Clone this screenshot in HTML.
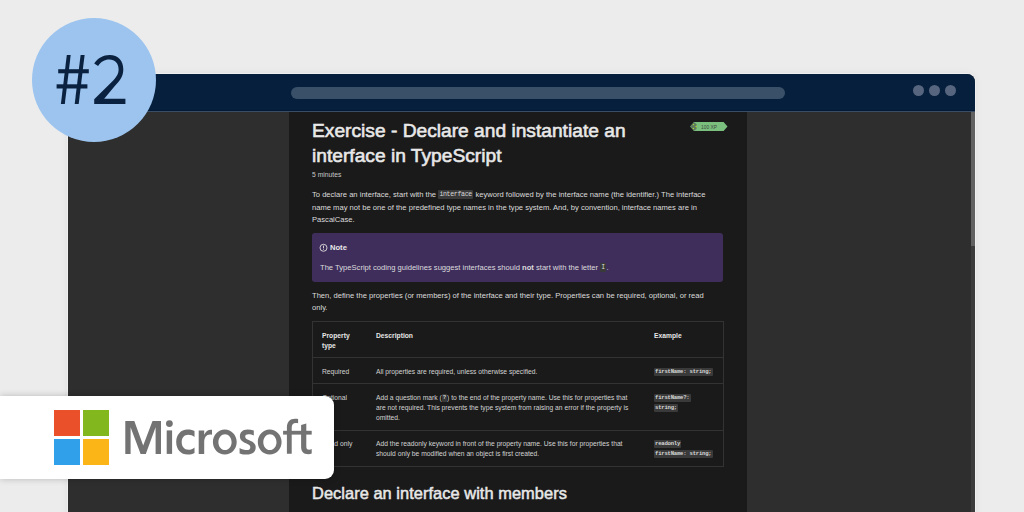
<!DOCTYPE html>
<html><head><meta charset="utf-8">
<style>
*{margin:0;padding:0;box-sizing:border-box}
html,body{width:1024px;height:512px;overflow:hidden;background:#ececec;font-family:"Liberation Sans",sans-serif}
.abs{position:absolute}
#win{position:absolute;left:68px;top:74px;width:907px;height:460px;border-radius:8px 8px 0 0;overflow:hidden;box-shadow:0 0 0 1px rgba(255,255,255,.4),0 0 8px rgba(0,0,0,.07);background:#2e2e2e}
#hdr{position:absolute;left:0;top:0;width:907px;height:38px;background:#051f3c;border-bottom:1px solid #3a4d65;box-shadow:inset 0 -1px 0 #031a34}
#addr{position:absolute;left:223px;top:13px;width:494px;height:12px;border-radius:6px;background:#3a5069}
.dot{position:absolute;top:11px;width:11px;height:11px;border-radius:50%;background:#57657f}
#col{position:absolute;left:221px;top:38px;width:458px;height:430px;background:#1a1a1a}
#sb{position:absolute;left:903px;top:38px;width:4px;height:430px;background:#3b3b3b}
#thumb{position:absolute;left:903px;top:38px;width:4px;height:134px;background:#616161}
.t{position:absolute;white-space:nowrap;color:#dcdcdc}
.title{font-size:19.2px;font-weight:normal;color:#e8e8e8;-webkit-text-stroke:0.6px #e8e8e8}
.p{font-size:7.6px}
.code{display:inline-block;font-family:"Liberation Mono",monospace;background:#3a3a3a;border-radius:1px}
.p .code{font-size:6.6px;letter-spacing:-0.35px;line-height:9px;height:9px;padding:0 1.5px 0 1.2px;color:#d8d8d8;vertical-align:1px}
.td .code{font-weight:bold;font-size:5.6px;letter-spacing:-0.22px;line-height:7.5px;height:7.5px;padding:0 1.2px 0 1px;color:#d8d8d8;vertical-align:1px}
#note{position:absolute;left:312px;top:233px;width:411px;height:49px;background:#3f2e5c;border-radius:3px}
#tbl{position:absolute;left:312px;top:321px;width:412px;height:146px;border:1px solid #333}
.hr{position:absolute;left:312px;width:411px;height:1px;background:#333}
.th{font-size:6.72px;font-weight:bold;color:#e6e6e6}
.td{font-size:6.72px;color:#d2d2d2}
#circle{position:absolute;left:32px;top:18px;width:124px;height:124px;border-radius:50%;background:#9cc4ef}
#ms{position:absolute;left:0;top:396px;width:334px;height:83px;background:#fff;border-radius:0 9px 9px 0;box-shadow:0 0 7px rgba(0,0,0,.22)}
.sq{position:absolute;width:26px;height:26px}
</style></head><body>
<div id="win">
  <div id="hdr">
    <div id="addr"></div>
    <div class="dot" style="left:845px"></div>
    <div class="dot" style="left:861px"></div>
    <div class="dot" style="left:877px"></div>
  </div>
  <div id="col"></div>
  <div id="sb"></div>
  <div id="thumb"></div>
</div>

<!-- content -->
<svg class="abs" style="left:685px;top:116px" width="50" height="20" viewBox="685 116 50 20">
<polygon points="690.2,126.5 694,122.1 723.6,122.1 727.5,126.5 723.6,131 694,131" fill="#7bbf7f"/>
<polygon points="690.2,126.5 694,122.3 696.5,124 696.5,129 694,130.8" fill="#5d7a5e"/>
<circle cx="693.5" cy="124.6" r="0.7" fill="#b5d82a"/><circle cx="693.5" cy="128.4" r="0.7" fill="#b5d82a"/><circle cx="696.2" cy="126.5" r="0.7" fill="#b5d82a"/>
<text x="701" y="128.6" font-family="Liberation Sans" font-size="5.6" fill="#3f4a40" textLength="16" lengthAdjust="spacingAndGlyphs">100 XP</text>
</svg>
<div class="t title" style="left:312px;top:120px">Exercise - Declare and instantiate an</div>
<div class="t title" style="left:312px;top:145px">interface in TypeScript</div>
<div class="t" style="left:312px;top:171px;font-size:6.75px;color:#c8c8c8">5 minutes</div>

<div class="t p" style="left:312px;top:190px">To declare an interface, start with the <span class="code">interface</span> keyword followed by the interface name (the identifier.) The interface</div>
<div class="t p" style="left:312px;top:203px">name may not be one of the predefined type names in the type system. And, by convention, interface names are in</div>
<div class="t p" style="left:312px;top:215px">PascalCase.</div>

<div id="note"></div>
<svg class="abs" style="left:319px;top:243px" width="9" height="9" viewBox="0 0 9 9"><circle cx="4.5" cy="4.8" r="3.5" fill="none" stroke="#e0e0e0" stroke-width="0.9"/><rect x="4.05" y="2.6" width="0.9" height="2.6" fill="#e0e0e0"/><rect x="4.05" y="5.8" width="0.9" height="0.9" fill="#e0e0e0"/></svg>
<div class="t p" style="left:330px;top:243px;font-weight:bold;color:#e8e8e8">Note</div>
<div class="t p" style="left:320px;top:263px">The TypeScript coding guidelines suggest interfaces should <b>not</b> start with the letter <span class="code">I</span>.</div>

<div class="t p" style="left:312px;top:291px">Then, define the properties (or members) of the interface and their type. Properties can be required, optional, or read</div>
<div class="t p" style="left:312px;top:303px">only.</div>

<div id="tbl"></div>
<div class="hr" style="top:357px"></div>
<div class="hr" style="top:383px"></div>
<div class="hr" style="top:430px"></div>

<div class="t th" style="left:322px;top:332px">Property</div>
<div class="t th" style="left:322px;top:342px">type</div>
<div class="t th" style="left:376px;top:332px">Description</div>
<div class="t th" style="left:654px;top:332px">Example</div>

<div class="t td" style="left:322px;top:368px">Required</div>
<div class="t td" style="left:376px;top:368px">All properties are required, unless otherwise specified.</div>
<div class="t td" style="left:654px;top:368px"><span class="code">firstName: string;</span></div>

<div class="t td" style="left:322px;top:394px">Optional</div>
<div class="t td" style="left:376px;top:394px">Add a question mark (<span class="code">?</span>) to the end of the property name. Use this for properties that</div>
<div class="t td" style="left:376px;top:404px">are not required. This prevents the type system from raising an error if the property is</div>
<div class="t td" style="left:376px;top:414px">omitted.</div>
<div class="t td" style="left:654px;top:394px"><span class="code">firstName?:</span></div>
<div class="t td" style="left:654px;top:404px"><span class="code">string;</span></div>

<div class="t td" style="left:322px;top:440px">Read only</div>
<div class="t td" style="left:376px;top:440px">Add the readonly keyword in front of the property name. Use this for properties that</div>
<div class="t td" style="left:376px;top:450px">should only be modified when an object is first created.</div>
<div class="t td" style="left:654px;top:440px"><span class="code">readonly</span></div>
<div class="t td" style="left:654px;top:450px"><span class="code">firstName: string;</span></div>

<div class="t" style="left:312px;top:484px;font-size:16.4px;letter-spacing:0.05px;color:#e8e8e8;-webkit-text-stroke:0.5px #e8e8e8">Declare an interface with members</div>

<!-- circle -->
<div id="circle"></div>
<svg class="abs" style="left:0;top:0" width="160" height="150" viewBox="0 0 160 150">
<g fill="#0a2240">
<polygon points="66.8,55 70.7,55 64.8,104 60.9,104"/>
<polygon points="80.6,55 84.6,55 78.7,104 74.7,104"/>
<rect x="58.2" y="69.2" width="30.6" height="4.1"/>
<rect x="56.6" y="84.3" width="30.8" height="4.2"/>
<path d="M94.2,63.6 C98,58 103.3,55.1 109.6,55.1 C118.2,55.1 123.3,61 123.3,69.3 C123.3,75.5 120.8,80 114.8,86 L104.2,98.8 L125.4,98.8 L125.4,103.9 L94.2,103.9 L94.2,99.3 L111.2,82.6 C116.5,77.4 118.6,73.8 118.6,69.5 C118.6,63.4 115,59.6 109.3,59.6 C104.5,59.6 100.8,62 98.1,66 Z"/>
</g>
</svg>

<!-- microsoft card -->
<div id="ms">
  <div class="sq" style="left:54px;top:14px;background:#ea5029"></div>
  <div class="sq" style="left:83px;top:14px;background:#83b71e"></div>
  <div class="sq" style="left:54px;top:43px;background:#2fa0e9"></div>
  <div class="sq" style="left:83px;top:43px;background:#fbb517"></div>
  </div>
<svg class="abs" style="left:0;top:0" width="340" height="512" viewBox="0 0 340 512">
<g fill="#737373">
<polygon points="125.3,421.1 134.3,421.1 143.2,445.6 152.5,421.1 161,421.1 161,453.9 155.6,453.9 155.6,427.2 145.8,453.9 140.6,453.9 130.6,427.2 130.6,453.9 125.3,453.9"/>
<rect x="166.7" y="430.4" width="5.4" height="23.5"/>
<circle cx="169.4" cy="423.6" r="3.4"/>
<path d="M194.5,431.1 C192,429.9 189.8,429.5 187.5,429.5 C180.6,429.5 176.2,435 176.2,442.05 C176.2,449.5 180.8,454.6 187.8,454.6 C190.3,454.6 192.5,454 194.5,453 L194.5,447.5 C192.8,448.9 190.8,449.8 188.5,449.8 C184.3,449.8 181.7,446.8 181.7,442.1 C181.7,437.4 184.5,434.7 188.2,434.7 C190.6,434.7 192.8,435.6 194.5,436.9 Z"/>
<path d="M198.7,430.5 L204.2,430.5 L204.2,434.8 C205.5,431.5 208,429.7 211,429.7 L212,429.8 L212,434.8 C211.5,434.6 210.8,434.5 210,434.5 C206.3,434.5 204.2,437.5 204.2,442 L204.2,454 L198.7,454 Z"/>
<path fill-rule="evenodd" d="M224.8,429.5 C231.4,429.5 236.7,435.1 236.7,442.05 C236.7,449 231.4,454.6 224.8,454.6 C218.2,454.6 212.9,449 212.9,442.05 C212.9,435.1 218.2,429.5 224.8,429.5 Z M225,434.3 C221.4,434.3 218.4,437.8 218.4,442.2 C218.4,446.6 221.4,450.1 225,450.1 C228.6,450.1 231.6,446.6 231.6,442.2 C231.6,437.8 228.6,434.3 225,434.3 Z"/>
<path d="M253.8,430.5 C251.8,429.8 249.6,429.5 247.5,429.5 C242.8,429.5 239.9,432.3 239.9,436.2 C239.9,439.8 242.2,441.6 246,443.3 C249,444.6 250.3,445.5 250.3,447.4 C250.3,449.1 248.9,450 246.9,450 C244.5,450 242,449.2 239.6,447.9 L239.6,453.4 C241.8,454.2 244.2,454.6 246.8,454.6 C252.2,454.6 255.7,451.9 255.7,447.5 C255.7,443.8 253.4,441.9 249.3,440.2 C246.6,439 245.2,438.3 245.2,436.4 C245.2,435 246.4,434.2 248.4,434.2 C250.4,434.2 252.2,434.7 253.8,435.6 Z"/>
<path fill-rule="evenodd" d="M269.7,429.5 C276.3,429.5 281.6,435.1 281.6,442.05 C281.6,449 276.3,454.6 269.7,454.6 C263.1,454.6 257.8,449 257.8,442.05 C257.8,435.1 263.1,429.5 269.7,429.5 Z M269.9,434.3 C266.3,434.3 263.3,437.8 263.3,442.2 C263.3,446.6 266.3,450.1 269.9,450.1 C273.5,450.1 276.5,446.6 276.5,442.2 C276.5,437.8 273.5,434.3 269.9,434.3 Z"/>
<path d="M286.9,453.7 L286.9,427.5 C286.9,421.7 290,418.7 295,418.7 C296.2,418.7 297.3,418.8 298.1,419.1 L298.1,423.3 C297.4,423 296.6,422.9 295.8,422.9 C293,422.9 291.7,424.6 291.7,428 L291.7,453.7 Z"/>
<rect x="283.1" y="430.8" width="28.6" height="3.8"/>
<path d="M301.1,424.9 L306.3,423.4 L306.3,446.5 C306.3,448.8 307.2,449.7 309.2,449.7 C310.1,449.7 311,449.5 311.7,449.1 L311.7,453.6 C310.8,454 309.6,454.2 308.3,454.2 C303.5,454.2 301.1,451.8 301.1,446.8 Z"/>
</g>
</svg>
</body></html>
